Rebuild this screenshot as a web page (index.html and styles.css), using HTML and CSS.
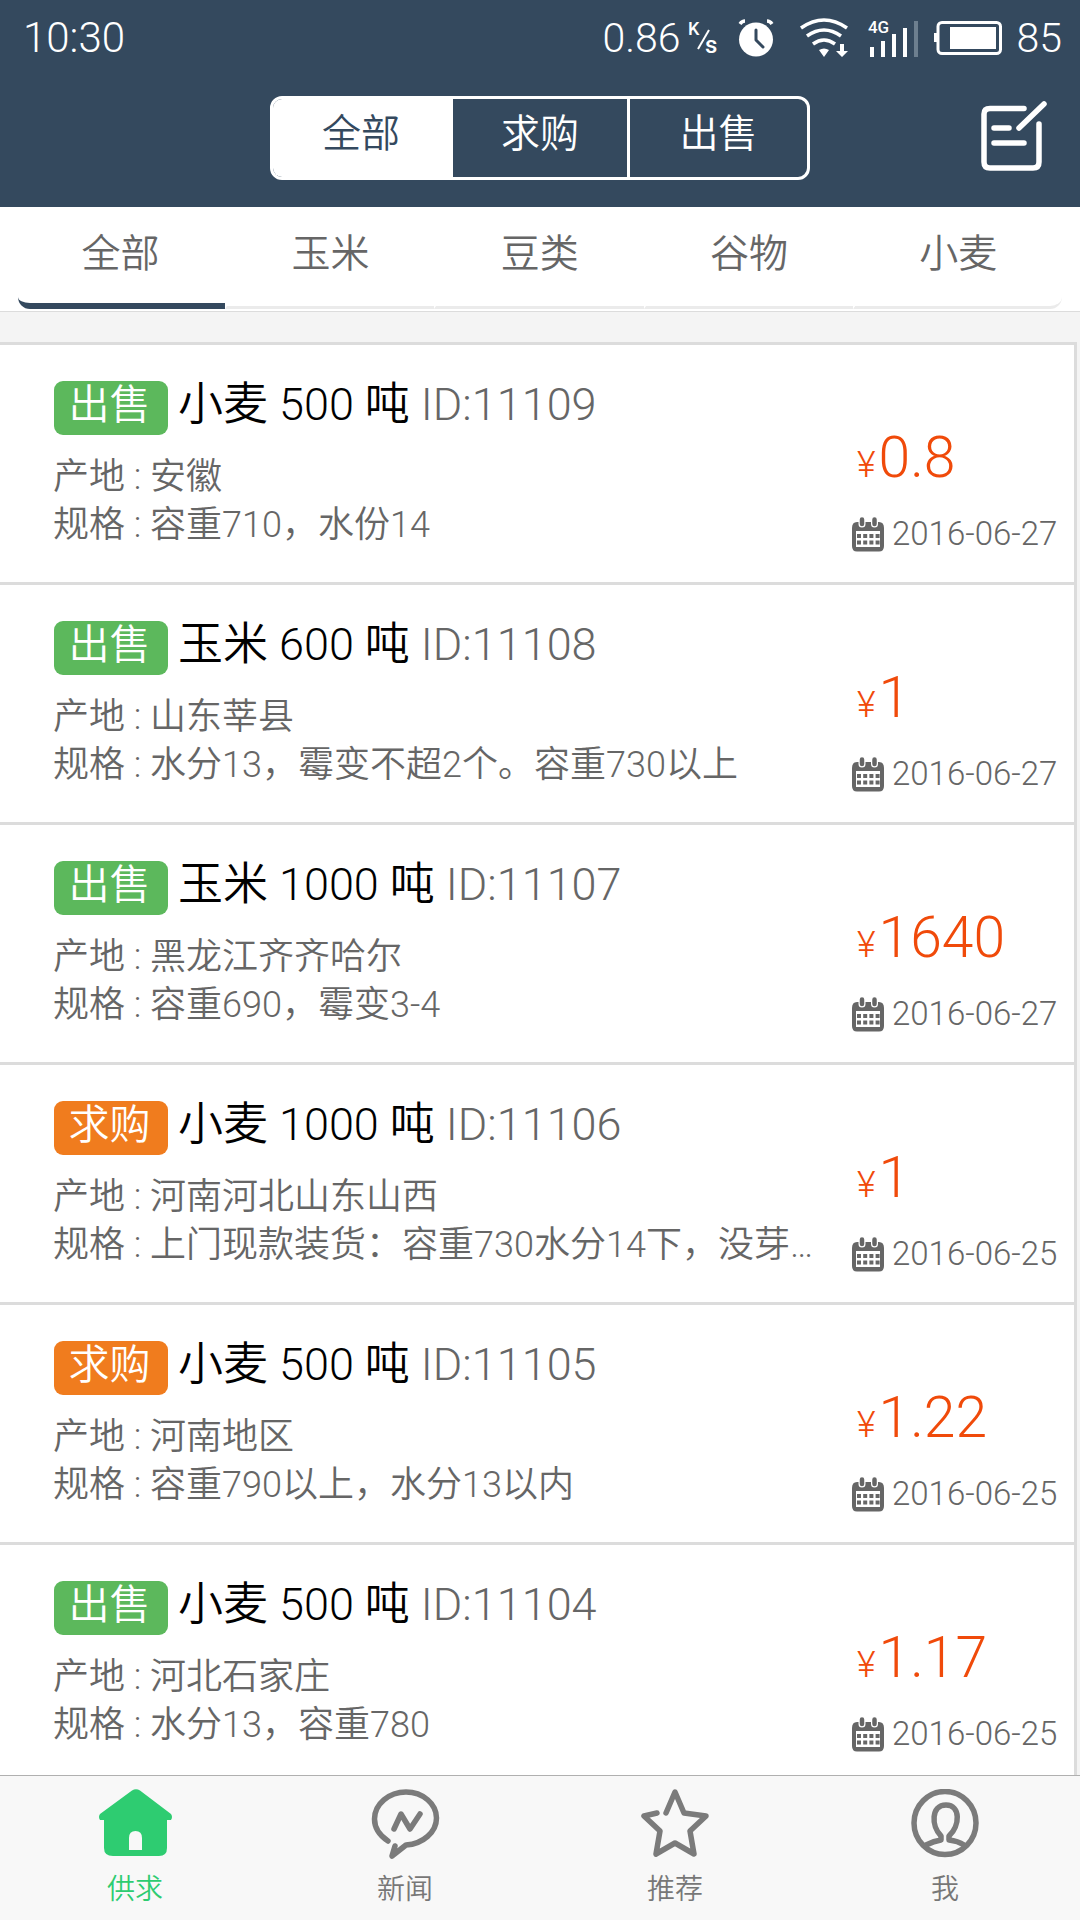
FILE: index.html
```html
<!DOCTYPE html>
<html lang="zh-CN">
<head>
    <meta charset="UTF-8">
    <title>供求</title>
    <link rel="stylesheet" href="styles.css">
</head>
<body>

<header class="header">
    <div class="status-bar">
        <span class="time">10:30</span>
        <span class="speed">0.86</span>
        <svg class="unit" width="32" height="40" viewBox="0 0 32 40">
            <text x="0" y="17" font-size="18">K</text>
            <text x="17" y="35" font-size="24">s</text>
            <path d="M10 31L21 12" stroke="#fff" stroke-width="2"/>
        </svg>
        <svg class="alarm" width="36" height="38" viewBox="0 0 36 38">
            <circle cx="18" cy="20.500" r="17" fill="#fff"/>
            <path d="M2 5Q4 2 7 2M29 2Q32 2 34 5" fill="none" stroke="#fff" stroke-width="3.500"/>
            <path d="M18 11v10l7 7" fill="none" stroke="#34495e" stroke-width="3" stroke-linecap="round" stroke-linejoin="round"/>
        </svg>
        <svg class="wifi" width="48" height="40" viewBox="0 0 48 40">
            <path d="M1 10Q24-6 47 10M7 18Q24 6 41 18M13 26Q24 18 35 26" fill="none" stroke="#fff" stroke-width="3.500"/>
            <path d="M19 32Q24 29 29 32L24 39ZM40 26h4v7h4l-6 6-6-6h4z" fill="#fff"/>
        </svg>
        <svg class="signal" width="51" height="42" viewBox="0 -2 51 42">
            <text x="0" y="14" font-size="17" textLength="21">4G</text>
            <path d="M2 28h4v10H2zM13 22h4v16h-4zM24 15h4v23h-4zM35 9h4v29h-4z" fill="#fff"/>
            <path d="M46 2h4v36h-4z" fill="#6d7f8f"/>
        </svg>
        <svg class="battery" width="69" height="34" viewBox="0 0 69 34">
            <rect x="4" y="1.500" width="62.500" height="31" rx="4" fill="none" stroke="#fff" stroke-width="3"/>
            <path d="M0 12h3v9H0zM16 6h46v22H16z" fill="#fff"/>
        </svg>
        <span class="level">85</span>
    </div>
    <div class="title-bar">
        <div class="segment">
            <a class="segment-item active">全部</a>
            <a class="segment-item">求购</a>
            <a class="segment-item">出售</a>
        </div>
        <svg class="edit" width="66" height="72" viewBox="0 0 66 72">
            <g fill="none" stroke="#fff" stroke-width="5.500" stroke-linecap="round" stroke-linejoin="round">
                <path d="M43 8.500H9Q3 8.500 3 14V62Q3 68 9 68H52Q58 68 58 62V24"/>
                <path d="M13 28H28M13 43H43M38 28L63 4"/>
            </g>
        </svg>
    </div>
</header>

<nav class="tabs">
    <a class="tab active">全部</a>
    <a class="tab">玉米</a>
    <a class="tab">豆类</a>
    <a class="tab">谷物</a>
    <a class="tab">小麦</a>
</nav>

<main class="list" id="list">
    <!-- Cards will be added here -->
</main>

<footer class="bottom-nav">
    <a class="nav-item active">
        <svg width="74" height="70" viewBox="-1 0 74 70">
            <path d="M33 1.500Q37-1 41 1.500L72 25Q74 28 72 31H68V59Q68 67 60 67H14Q5 67 5 59V31H1Q-1 28 1 25ZM30 61H43V49Q43 42 36.500 42Q30 42 30 49Z" fill="#2ecc71" fill-rule="evenodd"/>
        </svg>
        <span>供求</span>
    </a>
    <a class="nav-item">
        <svg width="74" height="70" viewBox="0 0 74 70">
            <g class="line">
                <path d="M20 52C11 46 6.500 38 6.500 30C6.500 15 21 3 38 3S68.500 15 68.500 29S55 55 38 56L24 67L27 57"/>
                <path d="M26 40L33 25L42 40L52 25"/>
            </g>
        </svg>
        <span>新闻</span>
    </a>
    <a class="nav-item">
        <svg width="74" height="70" viewBox="0 0 74 70">
            <path class="line" d="M28 24L37 3L46 24L68 27L52 42L56 65L37 54L18 65L22 42L6 27L19 24"/>
        </svg>
        <span>推荐</span>
    </a>
    <a class="nav-item">
        <svg width="74" height="70" viewBox="0 0 74 70">
            <g class="line">
                <ellipse cx="37" cy="34" rx="31" ry="31.500"/>
                <path d="M18 56Q26 52 33 51V47C23 37 23 16 38 16S52 37 41 47V51Q50 52 56 56"/>
            </g>
        </svg>
        <span>我</span>
    </a>
</footer>

<script>
    const items = [
        { type: 'sell', name: '小麦', amount: 500, id: 11109, origin: '安徽', spec: '容重710，水份14', price: '0.8', date: '2016-06-27' },
        { type: 'sell', name: '玉米', amount: 600, id: 11108, origin: '山东莘县', spec: '水分13，霉变不超2个。容重730以上', price: '1', date: '2016-06-27' },
        { type: 'sell', name: '玉米', amount: 1000, id: 11107, origin: '黑龙江齐齐哈尔', spec: '容重690，霉变3-4', price: '1640', date: '2016-06-27' },
        { type: 'buy', name: '小麦', amount: 1000, id: 11106, origin: '河南河北山东山西', spec: '上门现款装货：容重730水分14下，没芽…', price: '1', date: '2016-06-25' },
        { type: 'buy', name: '小麦', amount: 500, id: 11105, origin: '河南地区', spec: '容重790以上，水分13以内', price: '1.22', date: '2016-06-25' },
        { type: 'sell', name: '小麦', amount: 500, id: 11104, origin: '河北石家庄', spec: '水分13，容重780', price: '1.17', date: '2016-06-25' },
    ];

    const calendar = `<svg class="calendar" width="32" height="35" viewBox="0 0 32 35">
        <path d="M5 5H27Q32 5 32 11V29Q32 34.500 27 34.500H5Q0 34.500 0 29V11Q0 5 5 5ZM4 14V30H28V14Z" fill="#666" fill-rule="evenodd"/>
        <path d="M10 3V7M22.500 3V7" stroke="#fff" stroke-width="7" stroke-linecap="round"/>
        <path d="M10 2.500V7M22.500 2.500V7" stroke="#666" stroke-width="4.500" stroke-linecap="round"/>
        <path d="M5 19H28M5 25.500H28" stroke="#666" stroke-width="4" stroke-dasharray="4 2.200"/>
    </svg>`;

    document.getElementById('list').innerHTML = items.map(item => `
        <div class="card">
            <div class="info">
                <div class="title">
                    <span class="badge ${item.type}">${item.type === 'sell' ? '出售' : '求购'}</span>
                    <span class="name">${item.name} ${item.amount} 吨</span>
                    <span class="id">ID:${item.id}</span>
                </div>
                <p>产地 : ${item.origin}</p>
                <p>规格 : ${item.spec}</p>
            </div>
            <div class="side">
                <div class="price"><small>¥</small>${item.price}</div>
                <div class="date">${calendar}<span>${item.date}</span></div>
            </div>
        </div>`).join('');
</script>

</body>
</html>
```
FILE: styles.css
```css
* {
    box-sizing: border-box;
}
body {
    margin: 0;
    height: 1920px;
    display: flex;
    flex-direction: column;
    overflow: hidden;
    font-family: Roboto, "Noto Sans CJK SC", sans-serif;
    font-weight: 350;
    color: #666;
    background-color: #f4f4f4;
}
.header {
    height: 207px;
    flex: none;
    background-color: #34495e; /* Dark blue */
    color: white;
}
.status-bar {
    display: flex;
    align-items: center;
    height: 75px;
    padding: 0 18px 0 23px;
    font-size: 42px;
}
.status-bar svg {
    flex: none;
    overflow: visible;
}
.status-bar text {
    fill: white;
    font-weight: 500;
}
.time {
    margin-right: auto;
}
.speed, .level {
    font-size: 41px;
}
.unit {
    margin-left: 7px;
}
.alarm {
    margin-left: 18px;
}
.wifi {
    margin-left: 26px;
}
.signal {
    margin-left: 20px;
}
.battery {
    margin: 0 14px 0 15px;
}
.title-bar {
    display: flex;
    justify-content: flex-end;
    padding: 21px 33px 0 0;
}
.segment {
    display: flex;
    width: 540px;
    height: 84px;
    margin-right: 171px;
    border: 3px solid white;
    border-radius: 12px;
    overflow: hidden;
}
.segment-item {
    width: 180px;
    border-left: 3px solid white;
    font-size: 39px;
    line-height: 70px;
    text-align: center;
}
.segment-item:nth-child(2) {
    width: 174px;
    border-left: none;
}
.segment-item.active {
    padding-right: 4px;
    border-left: none;
    background-color: white;
    color: #34495e;
}
.edit {
    margin-top: 4px;
}
.tabs {
    display: flex;
    flex: none;
    height: 105px;
    padding: 0 18px 2px;
    background-color: white;
    border-bottom: 1px solid #dcdcdc;
}
.tab {
    width: 209.25px;
    border-bottom: 3px solid #ebebeb;
    border-left: 2px solid white;
    font-size: 39px;
    line-height: 94px;
    text-align: center;
}
.tab.active {
    width: 207px;
    padding-right: 2px;
    border-bottom: 6px solid #34495e;
    border-left: none;
    border-bottom-left-radius: 12px;
}
.tab:last-child {
    border-bottom-right-radius: 12px;
}
.list {
    flex: 1;
    min-height: 0;
    overflow: hidden;
    padding: 30px 3px 0 0;
}
.card {
    display: flex;
    height: 240px;
    background-color: white;
    border-top: 3px solid #dcdcdc;
    border-right: 3px solid #dcdcdc;
}
.info {
    width: 852px;
    padding: 36px 0 0 53px;
    white-space: nowrap;
}
.title {
    display: flex;
    height: 54px;
    margin-bottom: 18px;
    padding-left: 1px;
    font-size: 45px;
    line-height: 48px;
}
.badge {
    width: 114px;
    height: 54px;
    margin-right: 10px;
    padding-right: 3px;
    border-radius: 9px;
    color: white;
    font-size: 41px;
    line-height: 49px;
    text-align: center;
}
.sell {
    background-color: #5cb85c;
}
.buy {
    background-color: #f07c1e;
}
.name {
    margin-right: 11px;
    color: black;
}
.info p {
    margin: 0;
    font-size: 36px;
    line-height: 48px;
}
.side {
    padding-top: 80px;
}
.price {
    height: 89px;
    padding-left: 5px;
    color: #f04a0a;
    font-size: 57px;
    line-height: 65px;
}
.price small {
    margin-right: 3px;
    font-size: 36px;
}
.date {
    display: flex;
    align-items: center;
    font-size: 33px;
    line-height: 40px;
}
.calendar {
    margin-right: 8px;
}
.bottom-nav {
    display: flex;
    flex: none;
    height: 145px;
    background-color: #f8f8f8;
    border-top: 1px solid #b0b0b0;
}
.nav-item {
    flex: 1;
    display: flex;
    flex-direction: column;
    align-items: center;
    padding-top: 13px;
    color: #777;
    font-size: 28px;
    line-height: 48px;
}
.nav-item.active {
    color: #2ecc71;
}
.nav-item span {
    margin-top: 7px;
}
.line {
    fill: none;
    stroke: #7b7b7b;
    stroke-width: 5.5;
    stroke-linecap: round;
    stroke-linejoin: round;
}
```
